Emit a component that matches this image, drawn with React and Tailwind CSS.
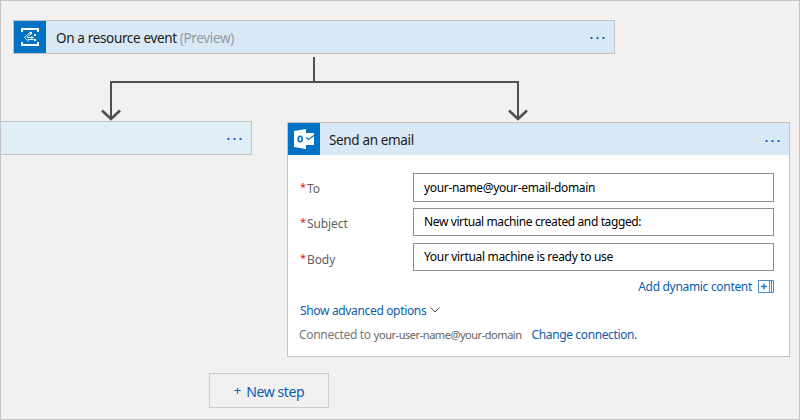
function Dots({ className }) {
  return (
    <svg className={`shrink-0 ${className || ""}`} width="15" height="2" viewBox="0 0 15 2" shapeRendering="crispEdges">
      {[0, 6, 12].map((x) => (
        <g key={x}>
          <rect x={x} y="0" width="3" height="2" fill="#7fb0dc" />
          <rect x={x + 1} y="0" width="1" height="2" fill="#0a55b0" />
        </g>
      ))}
    </svg>
  );
}

function EventIcon() {
  return (
    <span className="flex size-8 shrink-0 items-center justify-center bg-[#0072c6]">
      <svg width="20" height="20" viewBox="0 0 20 20" fill="none" stroke="#fff">
        <path d="M2 5V2H18V5M2 15V18H18V15" strokeWidth="2" />
        <path d="M10 5.500L4.500 10.500L9 14.500M7 10.500H14M7.500 9.500L12 6.500M8 12.500H14" strokeWidth=".9" />
        <path d="M10 5h2v2h-2zM14 7h2v2h-2zM11 9.500h2v2h-2zM14 12h2v2h-2z" fill="#fff" stroke="none" />
      </svg>
    </span>
  );
}

function OutlookIcon() {
  return (
    <span className="flex size-8 shrink-0 items-center justify-center bg-[#0072c6]">
      <svg width="20" height="20" viewBox="0 0 20 20">
        <path d="M0 2L12 0V20L0 18Z" fill="#fff" />
        <path d="M12 4H20V16H12Z" fill="#fff" />
        <path d="M12 8.500L14.500 10.500L20 6.500" fill="none" stroke="#0072c6" strokeWidth="1.300" />
        <ellipse cx="6.200" cy="10" rx="2" ry="2.800" fill="none" stroke="#0072c6" strokeWidth="1.600" />
      </svg>
    </span>
  );
}

function Connector() {
  return (
    <svg className="block h-[67px] w-[798px]" viewBox="1 54 798 67" fill="none" stroke="#505050" strokeWidth="2">
      <path d="M314 57V82M111 120V82H518V120" />
      <path d="M102 110.500L111 119L120 110.500M509 110.500L518 119L527 110.500" strokeWidth="2.600" />
    </svg>
  );
}

function Field({ label, value, labelClass, inputClass, valueClass }) {
  return (
    <div className="flex items-center">
      <div className={`flex w-[113px] text-[12px] leading-4 text-[#5f5f5f] ${labelClass}`}>
        <span className="-mt-0.5 w-[7px] text-[11px] leading-4 text-[#e81123]">*</span>
        <span className="tracking-[-0.1px]">{label}</span>
      </div>
      <div className={`flex w-[361px] items-center border border-[#8f8f8f] bg-white pl-[10px] text-[12px] text-black ${inputClass}`}>
        <span className={`whitespace-nowrap ${valueClass}`}>{value}</span>
      </div>
    </div>
  );
}

export default function App() {
  return (
    <div className="h-[420px] w-[800px] overflow-hidden border border-[#c3c3c3] bg-[#f1f1f1] pt-[19px] font-['Noto_Sans','Open_Sans',sans-serif]">
      <header className="ml-3 flex h-[34px] w-[602px] items-center border border-[#c3c3c3] bg-[#d9e8f5] pr-[9px]">
        <EventIcon />
        <h1 className="ml-[10px] flex-1 pt-px text-[13.5px] leading-5 tracking-[-0.35px] whitespace-nowrap text-[#1b1b1b]">
          On a resource event <span className="text-[#949ca3]">(Preview)</span>
        </h1>
        <Dots className="mt-[2px]" />
      </header>
      <Connector />
      <main className="flex items-start">
        <section className="flex h-[34px] w-[251px] items-center justify-end border border-l-0 border-[#c3c3c3] bg-[#e0eef6] pt-[2px] pr-[9px]">
          <Dots />
        </section>
        <div className="ml-[35px] w-[503px]">
          <section className="mt-px h-[235px] border border-[#c3c3c3] bg-white">
            <div className="flex h-8 items-center bg-[#d9e8f5] pr-[9px]">
              <OutlookIcon />
              <h2 className="ml-[9px] flex-1 pt-px text-[13.5px] leading-5 tracking-[-0.35px] text-[#1b1b1b]">Send an email</h2>
              <Dots className="mt-[3px]" />
            </div>
            <div className="flex flex-col pt-[18px] pl-3">
              <Field label="To" value="your-name@your-email-domain" labelClass="pt-[2px]" inputClass="h-[29px]" valueClass="tracking-[-0.33px]" />
              <div className="h-[6px]" />
              <Field label="Subject" value="New virtual machine created and tagged:" labelClass="pt-[3px]" inputClass="h-[28px]" valueClass="tracking-[-0.38px]" />
              <div className="h-[7px]" />
              <Field label="Body" value="Your virtual machine is ready to use" labelClass="pt-[6px]" inputClass="h-[28px]" valueClass="tracking-[-0.33px]" />
            </div>
            <div className="mt-[7px] flex h-4 items-center justify-end pr-[15px] text-[12px] leading-4 text-[#0a5cad]">
              <span className="mr-[6px] pt-[2px] tracking-[-0.31px]">Add dynamic content</span>
              <svg width="16" height="13" viewBox="0 0 16 13" fill="none" stroke="#4e8bc8">
                <path d="M.5 .5H15.500V12.500H.5ZM11.500 .5V12.500M13.500 .5V12.500" />
                <path d="M3 6.500H9M6 3.500V9.500" stroke="#3478bd" strokeWidth="1.500" />
              </svg>
            </div>
            <div className="mt-[9px] flex h-4 items-center pl-3 text-[12px] leading-4 text-[#0a5cad]">
              <span className="tracking-[-0.34px]">Show advanced options</span>
              <svg className="ml-1 -mt-[3px]" width="10" height="6" viewBox="0 0 10 6" fill="none" stroke="#444">
                <path d="M.5 .5L5 5L9.500 .5" />
              </svg>
            </div>
            <div className="mt-2 flex h-4 items-start pl-[11px] text-[12px] leading-4 whitespace-nowrap text-[#767676]">
              <span className="tracking-[-0.3px]">Connected to</span>
              <span className="ml-[3px] text-[11px] leading-4 tracking-[-0.45px] text-[#626262]">your-user-name@your-domain</span>
              <span className="ml-[10px] tracking-[-0.38px] text-[#0a5cad]">Change connection.</span>
            </div>
          </section>
        </div>
      </main>
      <button className="mt-4 ml-[208px] flex h-[35px] w-[120px] items-center justify-center border border-[#cccccc] bg-[#f1f1f1] pt-px text-[14px] text-[#0a5cad]">
        <span className="mr-[5px] text-[13px]">+</span>
        <span className="tracking-[-0.4px]">New step</span>
      </button>
    </div>
  );
}
